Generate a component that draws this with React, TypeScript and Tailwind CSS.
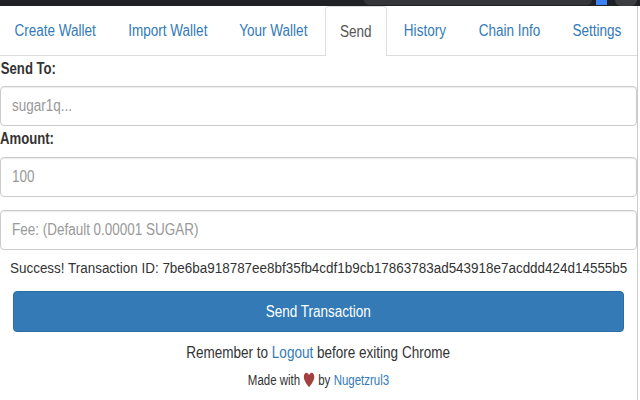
import type { ReactNode } from "react";

const leftTabs = [
  { label: "Create Wallet", width: "w-[111px]" },
  { label: "Import Wallet", width: "w-[109px]" },
  { label: "Your Wallet", width: "w-[99px]" },
];
const rightTabs = [
  { label: "History", width: "w-[72px]" },
  { label: "Chain Info", width: "w-[93px]" },
  { label: "Settings", width: "w-[78px]" },
];

// the screenshot is squeezed sideways, so the text has to be too
function Squeeze({ children }: { children: ReactNode }) {
  return <span className="inline-block scale-x-[0.845] whitespace-nowrap">{children}</span>;
}

function Field({ placeholder }: { placeholder: string }) {
  return (
    <div className="flex h-10 w-full items-center rounded border border-[#ccc] bg-white px-[11px] text-[16px] text-[#999] shadow-[inset_0_1px_1px_rgba(0,0,0,0.08)]">
      <span className="inline-block origin-left scale-x-[0.842] whitespace-nowrap">{placeholder}</span>
    </div>
  );
}

export default function App() {
  return (
    <div className="h-[400px] w-[640px] overflow-hidden bg-white font-['Liberation_Sans',Arial,sans-serif] text-[#333]">
      <div className="flex h-[6px] items-start justify-end gap-[8px] overflow-hidden bg-[#202124] pr-[3px]">
        <div className="h-[5px] w-[228px] rounded-b-lg bg-[#35363a]" />
        <div className="-ml-[4px] h-[5px] w-[11px] bg-[#3b82f6]" />
        <div className="h-[6px] w-[22px] rounded-b-full bg-[#3c3d40]" />
      </div>
      <div className="mr-[2px] border-r border-[#ccc]">
        <nav className="flex h-[50px] items-stretch gap-[2px] border-b border-[#ddd] text-[16px] text-[#337ab7]">
          {leftTabs.map((t) => (
            <a key={t.label} className={`${t.width} flex items-center justify-center`}>
              <Squeeze>{t.label}</Squeeze>
            </a>
          ))}
          <a className="-mb-px flex w-[62px] items-center justify-center rounded-t border border-b-0 border-[#ddd] bg-white text-[#555]">
            <Squeeze>Send</Squeeze>
          </a>
          {rightTabs.map((t) => (
            <a key={t.label} className={`${t.width} flex items-center justify-center`}>
              <Squeeze>{t.label}</Squeeze>
            </a>
          ))}
        </nav>
        <form className="flex h-[344px] flex-col">
          <label className="mt-[2px] h-[28px] text-[16px] font-bold leading-[22px]">
            <span className="inline-block origin-left scale-x-[0.82] whitespace-nowrap pl-px">Send To:</span>
          </label>
          <Field placeholder="sugar1q..." />
          <label className="mt-[2px] h-[29px] text-[16px] font-bold leading-[22px]">
            <span className="inline-block origin-left scale-x-[0.82] whitespace-nowrap">Amount:</span>
          </label>
          <Field placeholder="100" />
          <div className="mt-[13px]">
            <Field placeholder="Fee: (Default 0.00001 SUGAR)" />
          </div>
          <p className="mt-[8px] pl-[10px] text-[14px] leading-5">
            <span className="inline-block origin-left scale-x-[0.96] whitespace-nowrap">
              Success! Transaction ID: 7be6ba918787ee8bf35fb4cdf1b9cb17863783ad543918e7acddd424d14555b5
            </span>
          </p>
          <button
            type="button"
            className="mx-[13px] mt-[13px] h-[41px] rounded border border-[#2e6da4] bg-[#337ab7] text-[16px] text-white"
          >
            <Squeeze>Send Transaction</Squeeze>
          </button>
          <p className="mt-[11px] text-center text-[16px] leading-5">
            <Squeeze>
              Remember to <a className="text-[#337ab7]">Logout</a> before exiting Chrome
            </Squeeze>
          </p>
          <div className="mt-[7px] flex scale-x-[0.82] items-center justify-center gap-[4px] text-[14px] leading-5">
            <span>Made with</span>
            <svg viewBox="0 0 24 24" preserveAspectRatio="none" className="mb-px h-4 w-[14px] fill-[#a4403d]">
              <path d="M12 23C4 15 1 11 1 7C1 3.5 3.5 1 6.5 1C9 1 11 2.5 12 5C13 2.5 15 1 17.5 1C20.5 1 23 3.5 23 7C23 11 20 15 12 23Z" />
            </svg>
            <span>by</span>
            <a className="text-[#337ab7]">Nugetzrul3</a>
          </div>
        </form>
      </div>
    </div>
  );
}
